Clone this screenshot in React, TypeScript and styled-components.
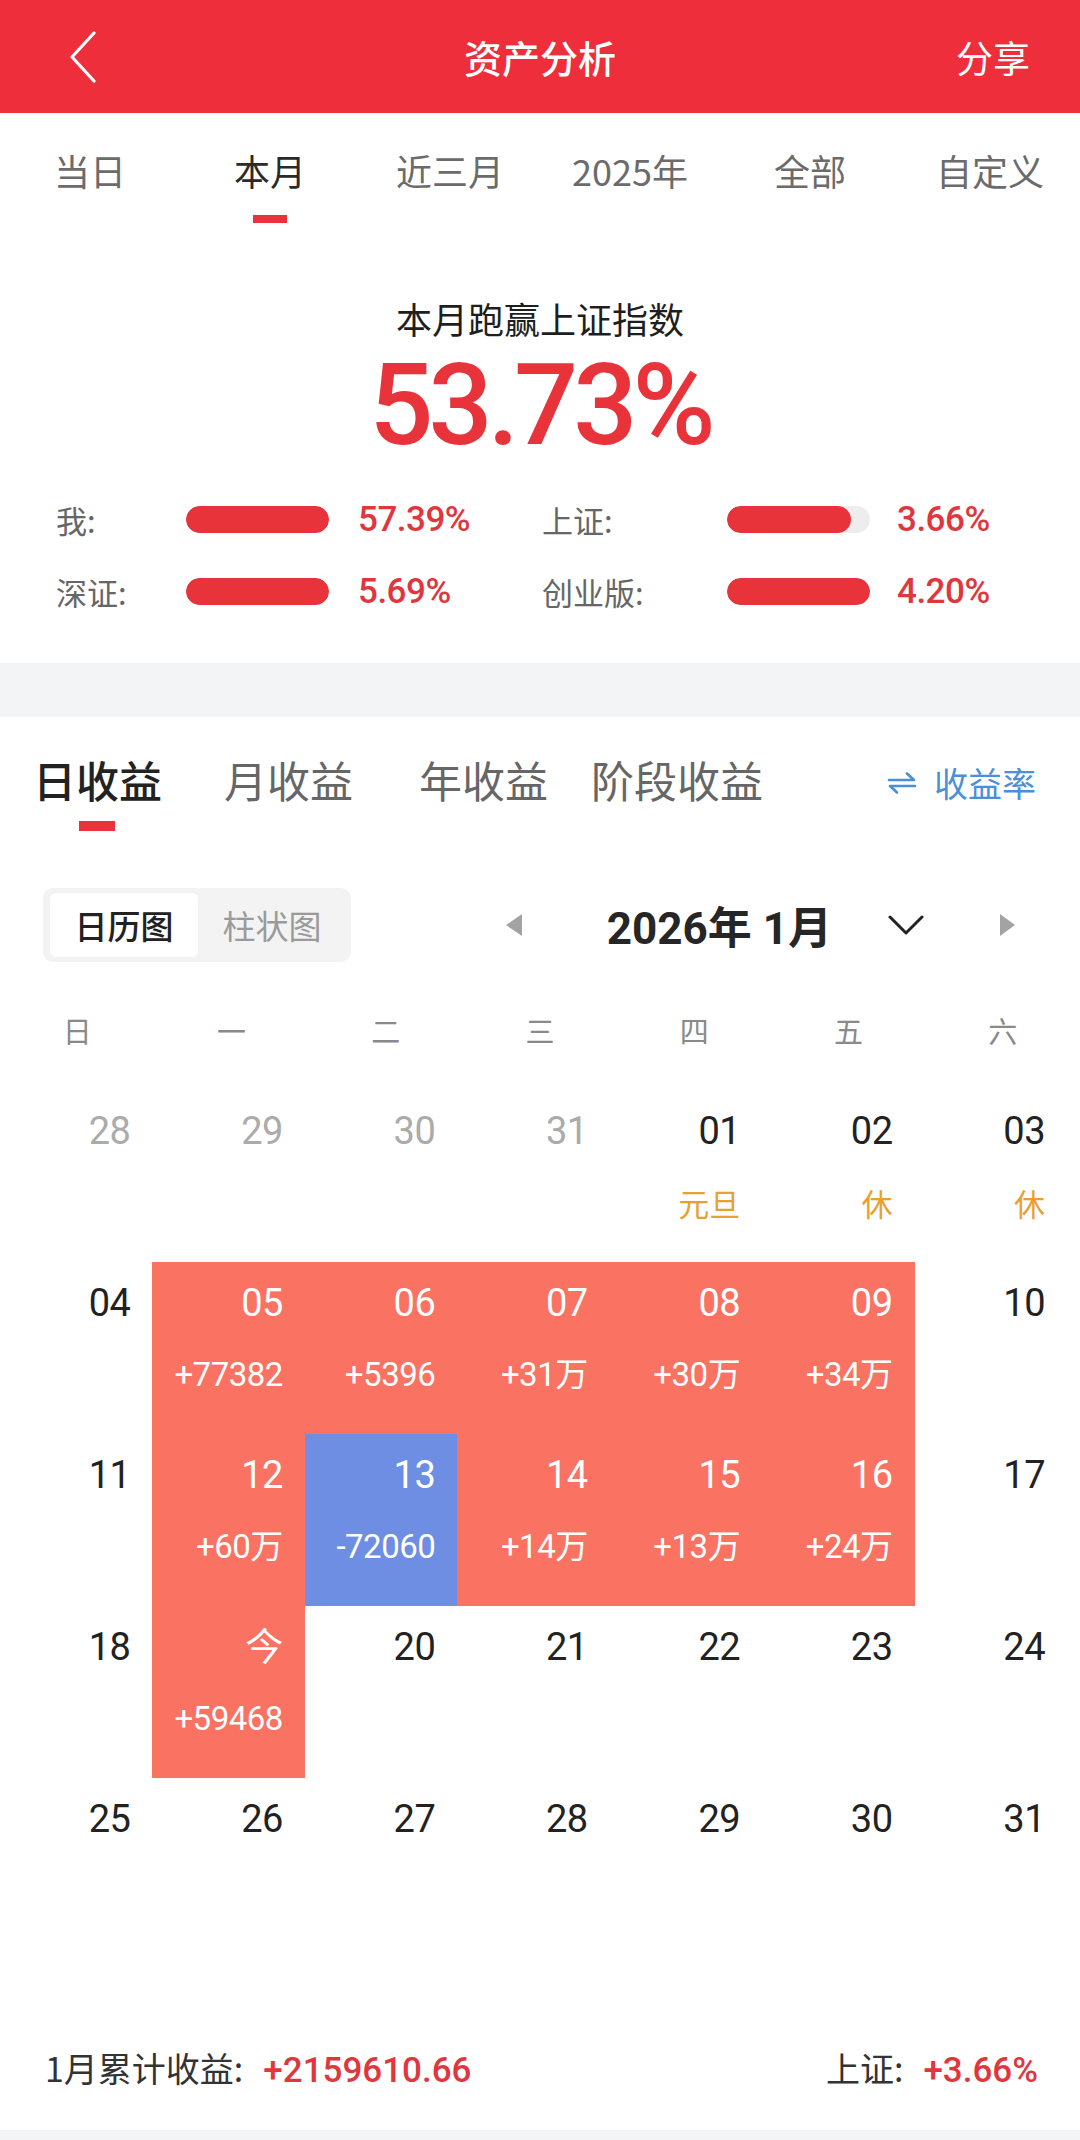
import React from "react";
import styled, { createGlobalStyle } from "styled-components";

const GlobalStyle = createGlobalStyle`
  html, body { margin: 0; padding: 0; background: #fff; }
  body { font-family: "Noto Sans CJK SC", "Noto Sans", sans-serif; -webkit-font-smoothing: antialiased; }
  * { box-sizing: border-box; }
`;

const NUM = `"Roboto", "Noto Sans CJK SC", sans-serif`;

const Page = styled.div`
  width: 1080px;
  background: #fff;
`;

const Header = styled.header`
  height: 113px;
  background: #ee2e3a;
  display: grid;
  grid-template-columns: 1fr auto 1fr;
  align-items: center;
  padding: 0 50px;
  color: #fff;
`;

const BackBtn = styled.div`
  justify-self: start;
  display: flex;
  align-items: center;
  margin-left: 19px;
`;

const Title = styled.h1`
  margin: 0;
  font-size: 38px;
  font-weight: 500;
  letter-spacing: 0;
`;

const Share = styled.div`
  justify-self: end;
  font-size: 37px;
`;

const PeriodTabs = styled.nav`
  display: grid;
  grid-template-columns: repeat(6, 180px);
  padding-top: 30px;
`;

const PeriodTab = styled.div<{ $active?: boolean }>`
  display: flex;
  flex-direction: column;
  align-items: center;
  font-size: 36px;
  line-height: 54px;
  color: ${(p) => (p.$active ? "#2a2a2a" : "#6b6b6b")};
`;

const TabLabel = styled.span`
  font-family: "Noto Sans CJK SC", sans-serif;
`;

const Underline = styled.i<{ $w: number; $h: number; $visible?: boolean }>`
  display: block;
  width: ${(p) => p.$w}px;
  height: ${(p) => p.$h}px;
  margin-top: 18px;
  background: ${(p) => (p.$visible ? "#e8333b" : "transparent")};
`;

const Summary = styled.section`
  display: flex;
  flex-direction: column;
  align-items: center;
  padding-top: 72px;
  height: 440px;
`;

const Headline = styled.div`
  font-size: 36px;
  line-height: 46px;
  color: #1e1e1e;
`;

const BigNumber = styled.div`
  font-family: ${NUM};
  font-size: 113px;
  line-height: 118px;
  font-weight: 500;
  color: #e8333b;
  letter-spacing: -5px;
  margin-top: 6px;
`;

const StatsGrid = styled.div`
  align-self: stretch;
  display: grid;
  grid-template-columns: 486px 486px;
  row-gap: 32px;
  padding-left: 56px;
  margin-top: 32px;
`;

const Stat = styled.div<{ $labelW: number }>`
  display: grid;
  grid-template-columns: ${(p) => p.$labelW}px 143px ${(p) => (p.$labelW > 150 ? 27 : 29)}px auto;
  align-items: center;
  height: 40px;
`;

const StatLabel = styled.span`
  font-size: 31px;
  color: #666;
`;

const Track = styled.div`
  width: 143px;
  height: 27px;
  border-radius: 14px;
  background: #ededed;
  overflow: hidden;
`;

const Fill = styled.div`
  height: 100%;
  border-radius: 14px;
  background: #e8333b;
`;

const StatValue = styled.span`
  grid-column: 4;
  font-family: ${NUM};
  font-size: 35px;
  font-weight: 500;
  color: #e0363e;
  letter-spacing: -0.5px;
`;

const Divider = styled.div<{ $h: number }>`
  height: ${(p) => p.$h}px;
  background: #f3f4f6;
`;

const ProfitTabs = styled.div`
  display: flex;
  align-items: flex-start;
  padding: 38px 44px 0 33px;
  height: 171px;
`;

const ProfitTabList = styled.div`
  display: grid;
  grid-template-columns: 191px 195px 172px auto;
`;

const ProfitTab = styled.div<{ $active?: boolean }>`
  display: flex;
  flex-direction: column;
  align-items: flex-start;
  font-size: 43px;
  line-height: 48px;
  font-weight: ${(p) => (p.$active ? 500 : 400)};
  color: ${(p) => (p.$active ? "#222" : "#666")};
`;

const ProfitUnderline = styled.i`
  display: block;
  width: 36px;
  height: 10px;
  background: #e8333b;
  margin: 18px 0 0 46px;
`;

const RateLink = styled.div`
  margin-left: auto;
  margin-top: 6px;
  display: flex;
  align-items: center;
  gap: 17px;
  color: #4a8fd8;
  font-size: 34px;
  line-height: 44px;
`;

const Toolbar = styled.div`
  display: flex;
  align-items: center;
  padding: 0 64px 0 43px;
`;

const Segmented = styled.div`
  display: flex;
  padding: 5px 5px 5px 7px;
  background: #f3f3f3;
  border-radius: 10px;
`;

const Segment = styled.div<{ $active?: boolean }>`
  width: 148px;
  height: 64px;
  display: flex;
  align-items: center;
  justify-content: center;
  border-radius: 6px;
  font-size: 33px;
  font-weight: ${(p) => (p.$active ? 500 : 400)};
  background: ${(p) => (p.$active ? "#fff" : "transparent")};
  color: ${(p) => (p.$active ? "#222" : "#9a9a9a")};
`;

const MonthNav = styled.div`
  margin-left: auto;
  display: flex;
  align-items: center;
`;

const MonthTitle = styled.div`
  font-family: ${NUM};
  font-size: 44px;
  font-weight: 700;
  color: #262626;
  margin: 0 56px 0 84px;
  white-space: pre;
`;

const WeekHeader = styled.div`
  display: grid;
  grid-template-columns: repeat(7, 1fr);
  margin-top: 48px;
  height: 80px;
`;

const WeekDay = styled.div`
  text-align: center;
  font-size: 29px;
  line-height: 40px;
  color: #8a8a8a;
`;

const CalendarGrid = styled.div`
  display: grid;
  grid-template-columns: repeat(7, 1fr);
  width: 1067px;
`;

type Tone = "up" | "down" | undefined;

const Cell = styled.div<{ $tone: Tone }>`
  height: 172px;
  display: flex;
  flex-direction: column;
  align-items: flex-end;
  padding: 18px 22px 0 0;
  background: ${(p) =>
    p.$tone === "up" ? "#fa7262" : p.$tone === "down" ? "#6e8ee3" : "transparent"};
`;

const DayNum = styled.div<{ $muted?: boolean; $onColor?: boolean }>`
  font-family: ${NUM};
  font-size: 38px;
  line-height: 46px;
  letter-spacing: -0.5px;
  color: ${(p) => (p.$onColor ? "#fff" : p.$muted ? "#ababab" : "#222")};
`;

const DayValue = styled.div`
  margin-top: 29px;
  font-family: ${NUM};
  font-size: 33px;
  line-height: 40px;
  letter-spacing: -0.5px;
  color: #fff;
`;

const Holiday = styled.div`
  margin-top: 29px;
  font-size: 31px;
  line-height: 40px;
  color: #e9a031;
`;

const Footer = styled.div`
  display: flex;
  align-items: center;
  justify-content: space-between;
  padding: 0 42px 0 45px;
  margin-top: 92px;
  height: 50px;
  font-size: 34px;
  color: #333;
`;

const FooterValue = styled.span`
  font-family: ${NUM};
  font-size: 35px;
  font-weight: 500;
  color: #e0363e;
  margin-left: 20px;
`;

const BottomBand = styled.div`
  height: 10px;
  margin-top: 38px;
  background: #f3f4f6;
`;

type Day = { d: string; muted?: boolean; holiday?: string; value?: string; tone?: Tone };

const rows: Day[][] = [
  [
    { d: "28", muted: true },
    { d: "29", muted: true },
    { d: "30", muted: true },
    { d: "31", muted: true },
    { d: "01", holiday: "元旦" },
    { d: "02", holiday: "休" },
    { d: "03", holiday: "休" },
  ],
  [
    { d: "04" },
    { d: "05", value: "+77382", tone: "up" },
    { d: "06", value: "+5396", tone: "up" },
    { d: "07", value: "+31万", tone: "up" },
    { d: "08", value: "+30万", tone: "up" },
    { d: "09", value: "+34万", tone: "up" },
    { d: "10" },
  ],
  [
    { d: "11" },
    { d: "12", value: "+60万", tone: "up" },
    { d: "13", value: "-72060", tone: "down" },
    { d: "14", value: "+14万", tone: "up" },
    { d: "15", value: "+13万", tone: "up" },
    { d: "16", value: "+24万", tone: "up" },
    { d: "17" },
  ],
  [
    { d: "18" },
    { d: "今", value: "+59468", tone: "up" },
    { d: "20" },
    { d: "21" },
    { d: "22" },
    { d: "23" },
    { d: "24" },
  ],
  [
    { d: "25" },
    { d: "26" },
    { d: "27" },
    { d: "28" },
    { d: "29" },
    { d: "30" },
    { d: "31" },
  ],
];

const stats = [
  { label: "我:", pct: 100, value: "57.39%", labelW: 130 },
  { label: "上证:", pct: 87, value: "3.66%", labelW: 185 },
  { label: "深证:", pct: 100, value: "5.69%", labelW: 130 },
  { label: "创业版:", pct: 100, value: "4.20%", labelW: 185 },
];

const periods = ["当日", "本月", "近三月", "2025年", "全部", "自定义"];

export default function App() {
  return (
    <Page>
      <GlobalStyle />
      <Header>
        <BackBtn>
          <svg width="28" height="52" viewBox="0 0 28 52" fill="none">
            <polyline points="25,2 3,26 25,50" stroke="#fff" strokeWidth="3.2" strokeLinecap="round" strokeLinejoin="round" />
          </svg>
        </BackBtn>
        <Title>资产分析</Title>
        <Share>分享</Share>
      </Header>

      <PeriodTabs>
        {periods.map((p) => (
          <PeriodTab key={p} $active={p === "本月"}>
            <TabLabel>{p}</TabLabel>
            <Underline $w={34} $h={8} $visible={p === "本月"} />
          </PeriodTab>
        ))}
      </PeriodTabs>

      <Summary>
        <Headline>本月跑赢上证指数</Headline>
        <BigNumber>53.73%</BigNumber>
        <StatsGrid>
          {stats.map((s) => (
            <Stat key={s.label} $labelW={s.labelW}>
              <StatLabel>{s.label}</StatLabel>
              <Track>
                <Fill style={{ width: `${s.pct}%` }} />
              </Track>
              <StatValue>{s.value}</StatValue>
            </Stat>
          ))}
        </StatsGrid>
      </Summary>

      <Divider $h={54} />

      <ProfitTabs>
        <ProfitTabList>
          <ProfitTab $active>
            日收益
            <ProfitUnderline />
          </ProfitTab>
          <ProfitTab>月收益</ProfitTab>
          <ProfitTab>年收益</ProfitTab>
          <ProfitTab>阶段收益</ProfitTab>
        </ProfitTabList>
        <RateLink>
          <svg width="30" height="24" viewBox="0 0 30 24" fill="none">
            <path d="M2 9 H27 L20 2.5" stroke="#4a8fd8" strokeWidth="2.6" strokeLinecap="round" strokeLinejoin="round" />
            <path d="M28 15 H3 L10 21.5" stroke="#4a8fd8" strokeWidth="2.6" strokeLinecap="round" strokeLinejoin="round" />
          </svg>
          收益率
        </RateLink>
      </ProfitTabs>

      <Toolbar>
        <Segmented>
          <Segment $active>日历图</Segment>
          <Segment>柱状图</Segment>
        </Segmented>
        <MonthNav>
          <svg width="18" height="24" viewBox="0 0 18 24">
            <polygon points="17,1 1,12 17,23" fill="#a3a3a3" />
          </svg>
          <MonthTitle>2026年 1月</MonthTitle>
          <svg width="36" height="20" viewBox="0 0 36 20" fill="none">
            <polyline points="2,2 18,18 34,2" stroke="#222" strokeWidth="3" strokeLinecap="round" strokeLinejoin="round" />
          </svg>
          <svg width="17" height="24" viewBox="0 0 17 24" style={{ marginLeft: 75 }}>
            <polygon points="1,1 16,12 1,23" fill="#a3a3a3" />
          </svg>
        </MonthNav>
      </Toolbar>

      <WeekHeader>
        {["日", "一", "二", "三", "四", "五", "六"].map((w) => (
          <WeekDay key={w}>{w}</WeekDay>
        ))}
      </WeekHeader>

      <CalendarGrid>
        {rows.flat().map((c, i) => (
          <Cell key={i} $tone={c.tone}>
            <DayNum $muted={c.muted} $onColor={!!c.tone}>{c.d}</DayNum>
            {c.value && <DayValue>{c.value}</DayValue>}
            {c.holiday && <Holiday>{c.holiday}</Holiday>}
          </Cell>
        ))}
      </CalendarGrid>

      <Footer>
        <span>
          1月累计收益:<FooterValue>+2159610.66</FooterValue>
        </span>
        <span>
          上证:<FooterValue>+3.66%</FooterValue>
        </span>
      </Footer>
      <BottomBand />
    </Page>
  );
}
